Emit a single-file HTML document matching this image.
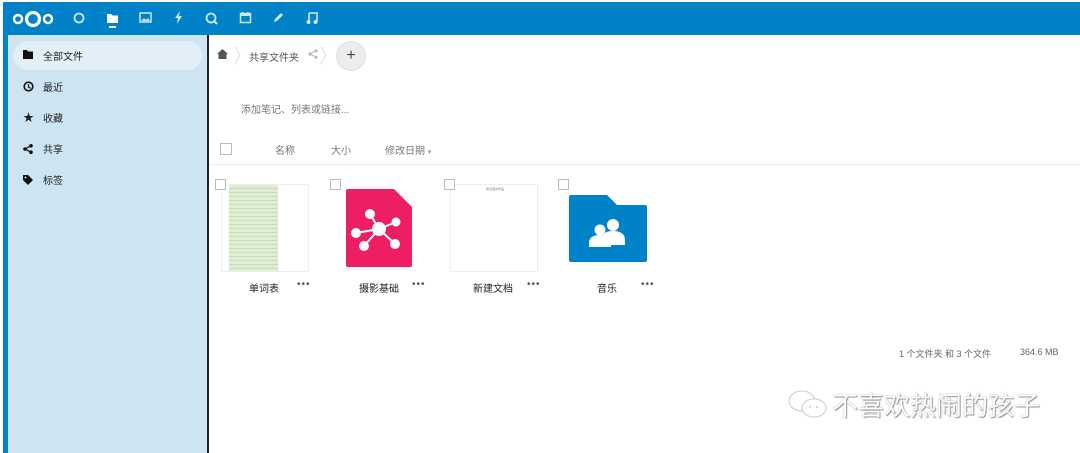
<!DOCTYPE html>
<html><head><meta charset="utf-8"><style>
*{margin:0;padding:0;box-sizing:border-box}
body{width:1080px;height:453px;overflow:hidden;background:#fff;font-family:"Liberation Sans","Noto Sans CJK SC",sans-serif;position:relative;font-size:10px;color:#333}
.top{position:absolute;left:3px;top:2px;width:1077px;height:33px;background:#0082c9}
.lstrip{position:absolute;left:3px;top:35px;width:5px;height:418px;background:#0082c9}
.side{position:absolute;left:8px;top:35px;width:199px;height:418px;background:#cde4f2}
.vline{position:absolute;left:207px;top:35px;width:2px;height:418px;background:#222}
.sel{position:absolute;left:13px;top:41px;width:189px;height:29px;border-radius:15px;background:#e3eff6}
.nav{position:absolute;left:23px;font-size:10px;color:#222}
.nav span{position:absolute;left:20px;top:0;white-space:nowrap}
.g{color:#666}
.cb{position:absolute;width:11px;height:11px;border:1px solid #bbb;background:#fff}
.fname{position:absolute;top:280px;font-size:10px;color:#222}
.dots{position:absolute;top:279px;font-size:10px;color:#555;letter-spacing:1px}
</style></head><body>
<div class="top"></div>
<svg style="position:absolute;left:12px;top:8px" width="42" height="22" viewBox="0 0 42 22">
<circle cx="6" cy="11" r="4" fill="none" stroke="#fff" stroke-width="2.5"/>
<circle cx="21" cy="11" r="6.5" fill="none" stroke="#fff" stroke-width="3.2"/>
<circle cx="36" cy="11" r="4" fill="none" stroke="#fff" stroke-width="2.5"/></svg>
<svg style="position:absolute;left:73px;top:12px" width="12" height="12"><circle cx="6" cy="6" r="4.5" fill="none" stroke="#fff" stroke-width="1.8" opacity=".8"/></svg>
<svg style="position:absolute;left:106px;top:12px" width="13" height="17"><path d="M1 2h4l1.5 1.5H12V11H1z" fill="#fff"/><rect x="3" y="14" width="7" height="2" fill="#fff"/></svg>
<svg style="position:absolute;left:139px;top:12px" width="13" height="12" opacity=".8"><rect x="1" y="1" width="11" height="9" fill="none" stroke="#fff" stroke-width="1.5"/><path d="M2 9l3-3 2 2 2-2 2 3z" fill="#fff"/></svg>
<svg style="position:absolute;left:174px;top:11px" width="10" height="13" opacity=".8"><path d="M6 0L1 7h3l-1 6 5-8H5z" fill="#fff"/></svg>
<svg style="position:absolute;left:205px;top:12px" width="13" height="13" opacity=".8"><circle cx="6" cy="6" r="4.5" fill="none" stroke="#fff" stroke-width="1.8"/><path d="M9 9l3 3" stroke="#fff" stroke-width="2"/></svg>
<svg style="position:absolute;left:239px;top:11px" width="13" height="13" opacity=".8"><rect x="1.5" y="2.5" width="10" height="9" fill="none" stroke="#fff" stroke-width="1.5"/><rect x="1.5" y="2.5" width="10" height="2.5" fill="#fff"/><path d="M4 1v3M9 1v3" stroke="#fff" stroke-width="1.5"/></svg>
<svg style="position:absolute;left:272px;top:12px" width="12" height="12" opacity=".8"><path d="M2 10l1-3 6-6 2 2-6 6z" fill="#fff"/></svg>
<svg style="position:absolute;left:306px;top:11px" width="12" height="14" opacity=".8"><path d="M3 2h8v9M3 2v9" stroke="#fff" stroke-width="1.6" fill="none"/><circle cx="2.5" cy="11" r="2" fill="#fff"/><circle cx="9.5" cy="11" r="2" fill="#fff"/></svg>

<div class="lstrip"></div>
<div class="side"></div>
<div class="vline"></div>
<div class="sel"></div>
<div class="nav" style="top:48px"><svg style="position:absolute;left:0;top:2px" width="10" height="9"><path d="M0 0h4l1 1.5h5V9H0z" fill="#111"/></svg><span>全部文件</span></div>
<div class="nav" style="top:79px"><svg style="position:absolute;left:0;top:2px" width="11" height="11"><circle cx="5.5" cy="5.5" r="4.3" fill="none" stroke="#111" stroke-width="1.6"/><path d="M5.5 3v3l2 1.3" stroke="#111" stroke-width="1.3" fill="none"/></svg><span>最近</span></div>
<div class="nav" style="top:110px"><span style="left:0;font-size:11px;top:-1px">★</span><span>收藏</span></div>
<div class="nav" style="top:141px"><svg style="position:absolute;left:0;top:3px" width="10" height="10"><circle cx="2" cy="5" r="1.8" fill="#111"/><circle cx="8" cy="1.8" r="1.8" fill="#111"/><circle cx="8" cy="8.2" r="1.8" fill="#111"/><path d="M2 5L8 1.8M2 5l6 3.2" stroke="#111" stroke-width="1.2"/></svg><span>共享</span></div>
<div class="nav" style="top:172px"><svg style="position:absolute;left:0;top:3px" width="10" height="10"><path d="M0 0h5l5 5-5 5-5-5z" fill="#111"/><circle cx="2.5" cy="2.5" r="1" fill="#cde4f2"/></svg><span>标签</span></div>

<svg style="position:absolute;left:217px;top:49px" width="11" height="10"><path d="M5.5 0L0 5h1.5v5h8V5H11z" fill="#555"/></svg>
<svg style="position:absolute;left:234px;top:45px" width="8" height="20"><path d="M1 1l5 9-5 9" stroke="#ddd" fill="none"/></svg>
<div style="position:absolute;left:249px;top:49px;font-size:10px;color:#555">共享文件夹</div>
<svg style="position:absolute;left:308px;top:49px" width="10" height="10" opacity=".4"><circle cx="2" cy="5" r="1.6" fill="#555"/><circle cx="8" cy="1.8" r="1.6" fill="#555"/><circle cx="8" cy="8.2" r="1.6" fill="#555"/><path d="M2 5L8 1.8M2 5l6 3.2" stroke="#555"/></svg>
<svg style="position:absolute;left:320px;top:45px" width="8" height="20"><path d="M1 1l5 9-5 9" stroke="#ddd" fill="none"/></svg>
<div style="position:absolute;left:336px;top:41px;width:30px;height:30px;border-radius:50%;background:#ededed;border:1px solid #e0e0e0;text-align:center;line-height:27px;font-size:16px;color:#444">+</div>

<div style="position:absolute;left:241px;top:101px;color:#777;font-size:10px">添加笔记、列表或链接...</div>

<div class="cb" style="left:220px;top:143px;width:12px;height:12px"></div>
<div style="position:absolute;left:275px;top:142px;color:#777">名称</div>
<div style="position:absolute;left:331px;top:142px;color:#777">大小</div>
<div style="position:absolute;left:385px;top:142px;color:#777">修改日期 <span style="font-size:7px;color:#999">▾</span></div>
<div style="position:absolute;left:209px;top:164px;width:871px;height:1px;background:#eee"></div>

<div style="position:absolute;left:221px;top:184px;width:88px;height:88px;border:1px solid #eee;background:#fff"></div>
<div style="position:absolute;left:229px;top:185px;width:49px;height:86px;background:repeating-linear-gradient(#dfedd5 0 3px,#c7dcb9 3px 4px)"></div>
<div class="cb" style="left:215px;top:179px"></div>
<div class="fname" style="left:249px">单词表</div><div class="dots" style="left:297px">•••</div>

<svg style="position:absolute;left:346px;top:189px" width="66" height="78" viewBox="0 0 66 78"><path d="M2 0h46l18 18v58a2 2 0 0 1-2 2H2a2 2 0 0 1-2-2V2a2 2 0 0 1 2-2z" fill="#ed1e62"/>
<g stroke="#fff" stroke-width="2" fill="#fff"><path d="M33 40L24 25M33 40L50 33M33 40L10 44M33 40L18 57M33 40L49 55"/><circle cx="33" cy="40" r="6"/><circle cx="24" cy="25" r="4"/><circle cx="50" cy="33" r="3.5"/><circle cx="10" cy="44" r="4"/><circle cx="18" cy="57" r="4"/><circle cx="49" cy="55" r="4"/></g></svg>
<div class="cb" style="left:330px;top:179px"></div>
<div class="fname" style="left:359px">摄影基础</div><div class="dots" style="left:412px">•••</div>

<div style="position:absolute;left:450px;top:184px;width:88px;height:88px;border:1px solid #eee;background:#fff"></div>
<div style="position:absolute;left:486px;top:187px;font-size:3px;color:#777">测试语文作品</div>
<div class="cb" style="left:444px;top:179px"></div>
<div class="fname" style="left:473px">新建文档</div><div class="dots" style="left:527px">•••</div>

<svg style="position:absolute;left:569px;top:195px" width="78" height="67" viewBox="0 0 78 67"><path d="M2 0h36l10 10h28a2 2 0 0 1 2 2v53a2 2 0 0 1-2 2H2a2 2 0 0 1-2-2V2a2 2 0 0 1 2-2z" fill="#0082c9"/>
<g fill="#fff"><circle cx="44" cy="30" r="6"/><path d="M33 44c0-6 5-8 11-8s12 2 12 9v5H33z"/><circle cx="31" cy="35" r="5.5"/><path d="M20 48c0-6 5-8 11-8s11 3 11 8v4H20z"/></g></svg>
<div class="cb" style="left:558px;top:179px"></div>
<div class="fname" style="left:597px">音乐</div><div class="dots" style="left:641px">•••</div>

<div style="position:absolute;left:899px;top:347px;font-size:9px;color:#666">1 个文件夹 和 3 个文件</div>
<div style="position:absolute;left:1020px;top:347px;font-size:9px;color:#666">364.6 MB</div>

<svg style="position:absolute;left:786px;top:389px" width="44" height="32" opacity=".6"><ellipse cx="16" cy="12" rx="13" ry="10" fill="#fff" stroke="#aaa"/><ellipse cx="28" cy="19" rx="12" ry="9" fill="#fff" stroke="#aaa"/><circle cx="24" cy="18" r="1" fill="#aaa"/><circle cx="31" cy="18" r="1" fill="#aaa"/></svg>
<div style="position:absolute;left:832px;top:390px;font-size:26px;line-height:32px;color:#fff;text-shadow:0 0 1px #777,1px 1px 1px #999">不喜欢热闹的孩子</div>
</body></html>
